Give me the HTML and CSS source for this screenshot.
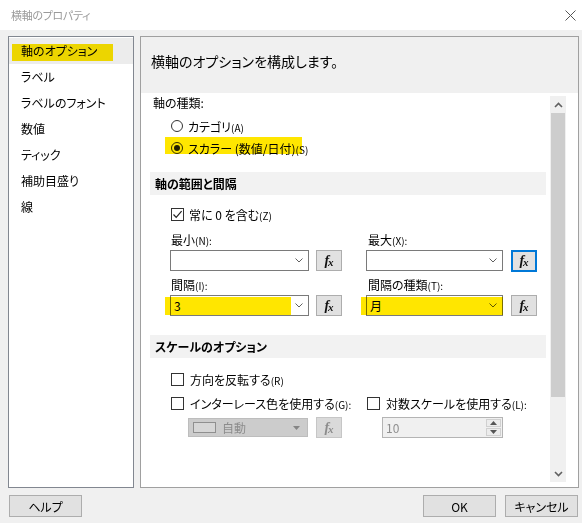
FILE: index.html
```html
<!DOCTYPE html>
<html lang="ja">
<head>
<meta charset="utf-8">
<title>横軸のプロパティ</title>
<link rel="stylesheet" href="styles.css">
</head>
<body>
<div class="dialog">
  <div class="titlebar">
    <span class="title">横軸のプロパティ</span>
    <svg class="close" width="11" height="11" viewBox="0 0 11 11"><path d="M0.5 0.5L10.5 10.5M10.5 0.5L0.5 10.5" stroke="#555" stroke-width="1" fill="none"/></svg>
  </div>

  <div class="main">
    <ul class="nav">
      <li class="sel"><span class="mark"></span>軸のオプション</li>
      <li>ラベル</li>
      <li>ラベルのフォント</li>
      <li>数値</li>
      <li>ティック</li>
      <li>補助目盛り</li>
      <li>線</li>
    </ul>

    <div class="panel">
      <div class="panel-head">横軸のオプションを構成します。</div>
      <div class="panel-body">
        <div class="content">
          <div class="field-label">軸の種類:</div>
          <div class="opt first"><span class="radio"></span><span>カテゴリ<small>(A)</small></span></div>
          <div class="opt"><span class="mark mark-radio"></span><span class="radio on"></span><span>スカラー (数値/日付)<small>(S)</small></span></div>

          <div class="band band-1">軸の範囲と間隔</div>
          <div class="opt check-row">
            <span class="check"><svg width="11" height="11" viewBox="0 0 11 11"><path d="M1.5 5.5L4.2 8.3L9.6 2.2" stroke="#222" stroke-width="1.2" fill="none"/></svg></span>
            <span>常に 0 を含む<small>(Z)</small></span>
          </div>

          <div class="grid">
            <div class="lbl">最小<small>(N):</small></div>
            <div class="lbl lbl-r">最大<small>(X):</small></div>
            <div class="ctrl">
              <div class="combo combo-l"><span class="val"></span><svg class="chev" width="8" height="5" viewBox="0 0 8 5"><path d="M0.5 0.5L4 4L7.5 0.5" stroke="#606060" fill="none"/></svg></div>
              <div class="fx"><i>f</i><b>x</b></div>
            </div>
            <div class="ctrl">
              <div class="combo combo-r"><span class="val"></span><svg class="chev" width="8" height="5" viewBox="0 0 8 5"><path d="M0.5 0.5L4 4L7.5 0.5" stroke="#606060" fill="none"/></svg></div>
              <div class="fx focus"><i>f</i><b>x</b></div>
            </div>

            <div class="lbl lbl-2">間隔<small>(I):</small></div>
            <div class="lbl lbl-2 lbl-r">間隔の種類<small>(T):</small></div>
            <div class="ctrl">
              <div class="combo combo-l"><span class="val">3</span><svg class="chev" width="8" height="5" viewBox="0 0 8 5"><path d="M0.5 0.5L4 4L7.5 0.5" stroke="#606060" fill="none"/></svg><span class="mark mark-combo-l"></span></div>
              <div class="fx"><i>f</i><b>x</b></div>
            </div>
            <div class="ctrl">
              <div class="combo combo-r"><span class="val">月</span><svg class="chev" width="8" height="5" viewBox="0 0 8 5"><path d="M0.5 0.5L4 4L7.5 0.5" stroke="#606060" fill="none"/></svg><span class="mark mark-combo-r"></span></div>
              <div class="fx"><i>f</i><b>x</b></div>
            </div>
          </div>

          <div class="band band-2">スケールのオプション</div>
          <div class="grid grid-2">
            <div class="opt2 span2"><span class="check"></span><span>方向を反転する<small>(R)</small></span></div>
            <div class="opt2"><span class="check"></span><span>インターレース色を使用する<small>(G):</small></span></div>
            <div class="opt2"><span class="check"></span><span>対数スケールを使用する<small>(L):</small></span></div>
            <div class="ctrl ctrl-3">
              <div class="colorcombo"><span class="swatch"></span><span class="auto">自動</span><svg class="tri" width="7" height="4" viewBox="0 0 7 4"><path d="M0 0H7L3.5 4Z" fill="#858585"/></svg></div>
              <div class="fx disabled"><i>f</i><b>x</b></div>
            </div>
            <div class="ctrl ctrl-3">
              <div class="spin">
                <span class="spin-val">10</span>
                <span class="spin-btns">
                  <span class="sb"><svg width="7" height="4" viewBox="0 0 7 4"><path d="M0 4H7L3.5 0Z" fill="#555"/></svg></span>
                  <span class="sb"><svg width="7" height="4" viewBox="0 0 7 4"><path d="M0 0H7L3.5 4Z" fill="#555"/></svg></span>
                </span>
              </div>
            </div>
          </div>
        </div>

        <div class="scrollbar">
          <div class="sb-arrow"><svg width="9" height="6" viewBox="0 0 9 6"><path d="M1 5L4.5 1.5L8 5" stroke="#606060" stroke-width="1.6" fill="none"/></svg></div>
          <div class="sb-track"><div class="sb-thumb"></div></div>
          <div class="sb-arrow"><svg width="9" height="6" viewBox="0 0 9 6"><path d="M1 1L4.5 4.5L8 1" stroke="#606060" stroke-width="1.6" fill="none"/></svg></div>
        </div>
      </div>
    </div>
  </div>

  <div class="footer">
    <button class="btn">ヘルプ</button>
    <span class="spacer"></span>
    <button class="btn">OK</button>
    <button class="btn">キャンセル</button>
  </div>
</div>
</body>
</html>
```

FILE: styles.css
```css
* { box-sizing: border-box; }

html, body {
  margin: 0;
  padding: 0;
}

body {
  width: 582px;
  height: 523px;
  overflow: hidden;
  background: #f0f0f0;
  font-family: "Noto Sans CJK JP", "Noto Sans", sans-serif;
  font-size: 12px;
  font-feature-settings: "palt" 1;
  color: #000;
}

small {
  font-size: 10px;
}

.dialog {
  width: 582px;
  height: 523px;
  display: flex;
  flex-direction: column;
}

/* title bar */
.titlebar {
  height: 30px;
  background: #fff;
  display: flex;
  align-items: center;
  padding-left: 11px;
  padding-right: 6px;
}
.title {
  color: #9a9a9a;
  font-size: 11px;
  letter-spacing: -0.3px;
}
.close {
  margin-left: auto;
}

/* main area */
.main {
  display: flex;
  gap: 6px;
  padding: 6px 3px 0 8px;
  height: 458px;
}

.nav {
  list-style: none;
  margin: 0;
  padding: 1px 0;
  width: 126px;
  height: 452px;
  background: #fff;
  border: 1px solid #828790;
}
.nav li {
  position: relative;
  height: 26px;
  line-height: 26px;
  padding-left: 12px;
  white-space: nowrap;
}
.nav li.sel {
  background: #ececec;
}

.mark {
  position: absolute;
  background: #ffe600;
  mix-blend-mode: multiply;
}
.nav .mark {
  left: 3px;
  top: 6px;
  width: 101px;
  height: 17px;
}

.panel {
  width: 439px;
  height: 452px;
  border: 1px solid #a0a0a0;
  display: flex;
  flex-direction: column;
  background: #fff;
}
.panel-head {
  height: 56px;
  background: #f0f0f0;
  padding: 14px 0 0 10px;
  font-size: 14px;
  line-height: 20px;
}
.panel-body {
  flex: 1;
  display: flex;
  background: #fff;
}
.content {
  flex: 1;
}

.field-label {
  height: 20px;
  line-height: 20px;
  padding-left: 12px;
}

.opt {
  position: relative;
  display: flex;
  align-items: center;
  gap: 5px;
  height: 22px;
  padding-left: 30px;
}
.opt.first {
  margin-top: 2px;
}
.mark-radio {
  left: 24px;
  top: 0;
  width: 137px;
  height: 17px;
}

.radio {
  width: 12px;
  height: 12px;
  border: 1px solid #333;
  border-radius: 50%;
  display: flex;
  align-items: center;
  justify-content: center;
  flex: none;
}
.radio.on::after {
  content: "";
  width: 6px;
  height: 6px;
  border-radius: 50%;
  background: #222;
}

.check {
  width: 13px;
  height: 13px;
  border: 1px solid #333;
  background: #fff;
  display: flex;
  align-items: center;
  justify-content: center;
  flex: none;
}

.band {
  height: 23px;
  line-height: 23px;
  margin: 0 4px 0 9px;
  padding-left: 5px;
  background: #f2f2f2;
  font-weight: bold;
}
.band-1 { margin-top: 13px; }
.band-2 { margin-top: 19px; }

.check-row { margin-top: 8px; }

.grid {
  display: grid;
  grid-template-columns: 196px 1fr;
  padding-left: 29px;
}
.lbl {
  height: 16px;
  line-height: 16px;
  margin-top: 7px;
  padding-left: 1px;
}
.lbl-r { padding-left: 2px; }
.lbl-2 { margin-top: 6px; }

.ctrl {
  display: flex;
  align-items: center;
  margin-top: 2px;
  height: 21px;
}

.combo {
  position: relative;
  height: 21px;
  border: 1px solid #7a7a7a;
  background: #fff;
  display: flex;
  align-items: center;
  padding: 0 5px 0 3px;
}
.combo-l { width: 139px; margin-right: 7px; }
.combo-r { width: 137px; margin-right: 8px; }
.combo .val {
  flex: 1;
  line-height: 19px;
}
.chev { flex: none; }

.mark-combo-l {
  left: -6px;
  top: 1px;
  width: 126px;
  height: 18px;
}
.mark-combo-r {
  left: -6px;
  top: 1px;
  width: 142px;
  height: 18px;
}

.fx {
  width: 26px;
  height: 21px;
  border: 1px solid #adadad;
  background: #e1e1e1;
  display: flex;
  align-items: center;
  justify-content: center;
  font-family: "Liberation Serif", "DejaVu Serif", serif;
  color: #111;
  line-height: 1;
}
.fx i {
  font-weight: bold;
  font-size: 14px;
}
.fx b {
  font-style: italic;
  font-size: 11px;
  margin-left: -1px;
  margin-top: 3px;
}
.fx.focus {
  border: 2px solid #0078d7;
  height: 22px;
}
.fx.disabled {
  background: #dadada;
  border-color: #c6c6c6;
  color: #8c8c8c;
}

.grid-2 {
  margin-top: 9px;
}
.opt2 {
  display: flex;
  align-items: center;
  gap: 6px;
  height: 24px;
  padding-left: 1px;
}
.span2 {
  grid-column: 1 / 3;
}

.ctrl-3 { margin-top: 2px; }

.colorcombo {
  margin-left: 18px;
  width: 120px;
  height: 19px;
  background: #cccccc;
  border: 1px solid #bdbdbd;
  display: flex;
  align-items: center;
  padding: 0 7px 0 4px;
  margin-right: 8px;
}
.swatch {
  width: 23px;
  height: 11px;
  border: 1px solid #8f8f8f;
  background: #d6d6d6;
  flex: none;
}
.auto {
  color: #8c8c8c;
  margin-left: 6px;
  flex: 1;
}
.tri { flex: none; }

.spin {
  margin-left: 16px;
  width: 121px;
  height: 21px;
  background: #f0f0f0;
  border: 1px solid #b4b4b4;
  display: flex;
  padding: 1px;
}
.spin-val {
  flex: 1;
  color: #8f8f8f;
  padding-left: 2px;
  line-height: 17px;
}
.spin-btns {
  width: 15px;
  display: flex;
  flex-direction: column;
  gap: 1px;
}
.sb {
  flex: 1;
  border: 1px solid #d0d0d0;
  background: #ececec;
  display: flex;
  align-items: center;
  justify-content: center;
}

/* scrollbar */
.scrollbar {
  width: 16px;
  margin: 3px 12px 5px 0;
  background: #f0f0f0;
  display: flex;
  flex-direction: column;
}
.sb-arrow {
  height: 17px;
  display: flex;
  align-items: center;
  justify-content: center;
}
.sb-track {
  flex: 1;
}
.sb-thumb {
  height: 284px;
  margin: 0 1px;
  background: #cdcdcd;
}

/* footer */
.footer {
  display: flex;
  gap: 9px;
  padding: 7px 4px 0 9px;
}
.spacer { flex: 1; }
.btn {
  width: 73px;
  height: 22px;
  border: 1px solid #adadad;
  background: #e1e1e1;
  font-family: inherit;
  font-size: 12px;
  font-feature-settings: "palt" 1;
  padding: 0;
  color: #000;
}
```
